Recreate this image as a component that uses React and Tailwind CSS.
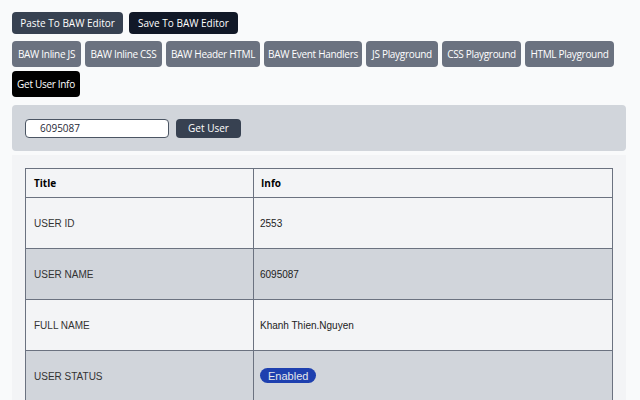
export default function App() {
  const rows = [
    { t: "USER ID", v: "2553" },
    { t: "USER NAME", v: "6095087" },
    { t: "FULL NAME", v: "Khanh Thien.Nguyen" },
    { t: "USER STATUS", v: null },
  ];
  const tabs = [
    { t: "BAW Inline JS", w: "w-[69px]" },
    { t: "BAW Inline CSS", w: "w-[77px]" },
    { t: "BAW Header HTML", w: "w-[94px]" },
    { t: "BAW Event Handlers", w: "w-[98px]" },
    { t: "JS Playground", w: "w-[72px]" },
    { t: "CSS Playground", w: "w-[79px]" },
    { t: "HTML Playground", w: "w-[89px]" },
  ];
  return (
    <div className="w-[640px] h-[400px] overflow-hidden bg-[#f9fafb] px-3 pt-3" style={{ fontFamily: '"Open Sans", "Noto Sans", sans-serif' }}>
      <div className="flex gap-1.5">
        <button className="h-[22px] w-[111px] rounded bg-[#374151] text-white text-[10px] leading-none">Paste To BAW Editor</button>
        <button className="h-[22px] w-[109px] rounded bg-[#111827] text-white text-[10px] leading-none">Save To BAW Editor</button>
      </div>
      <div className="mt-[7px] flex flex-wrap gap-1 w-[610px]">
        {tabs.map((t) => (
          <button key={t.t} className={`h-[26px] ${t.w} rounded bg-[#6b7280] text-white text-[10px] tracking-[-0.3px] leading-none whitespace-nowrap`}>{t.t}</button>
        ))}
        <button className="h-[26px] w-[68px] rounded bg-black text-white text-[10px] tracking-[-0.3px] leading-none whitespace-nowrap">Get User Info</button>
      </div>
      <div className="mt-[8px] h-[46px] w-[614px] rounded bg-[#d1d5db] flex items-center gap-[7px] px-[13px]">
        <div className="h-[19px] w-[144px] rounded border border-[#4b5563] bg-white flex items-center pl-[14px] text-[10px] text-[#1f2937]">6095087</div>
        <button className="h-[19px] w-[65px] rounded bg-[#374151] text-white text-[10px] leading-none">Get User</button>
      </div>
      <div className="mt-[4px] w-[614px] h-[260px] bg-[#f3f4f6] px-[13px] pt-[13px]">
        <table className="w-[588px] border-collapse border border-[#6b7280]" style={{ fontFamily: '"Liberation Sans", Arial, sans-serif' }}>
          <thead>
            <tr className="h-[29px] bg-[#f3f4f6]">
              <th className="w-[228px] border border-[#6b7280] text-left px-[8px] text-[10px] font-bold text-black" style={{ fontFamily: '"Open Sans", sans-serif' }}>Title</th>
              <th className="border border-[#6b7280] text-left px-[7px] text-[10px] font-bold text-black" style={{ fontFamily: '"Open Sans", sans-serif' }}>Info</th>
            </tr>
          </thead>
          <tbody>
            {rows.map((r, i) => (
              <tr key={r.t} className={`h-[51px] ${i % 2 === 0 ? "bg-[#f3f4f6]" : "bg-[#d1d5db]"}`}>
                <td className="border border-[#6b7280] px-[8px] text-[10px] text-[#333]">{r.t}</td>
                <td className="border border-[#6b7280] px-[6px] text-[10px] text-[#222]">
                  {r.v ?? (
                    <span className="inline-flex items-center h-[15px] px-[8px] rounded-full bg-[#1e40af] text-[#e5e7eb] text-[11px]">Enabled</span>
                  )}
                </td>
              </tr>
            ))}
          </tbody>
        </table>
      </div>
    </div>
  );
}
